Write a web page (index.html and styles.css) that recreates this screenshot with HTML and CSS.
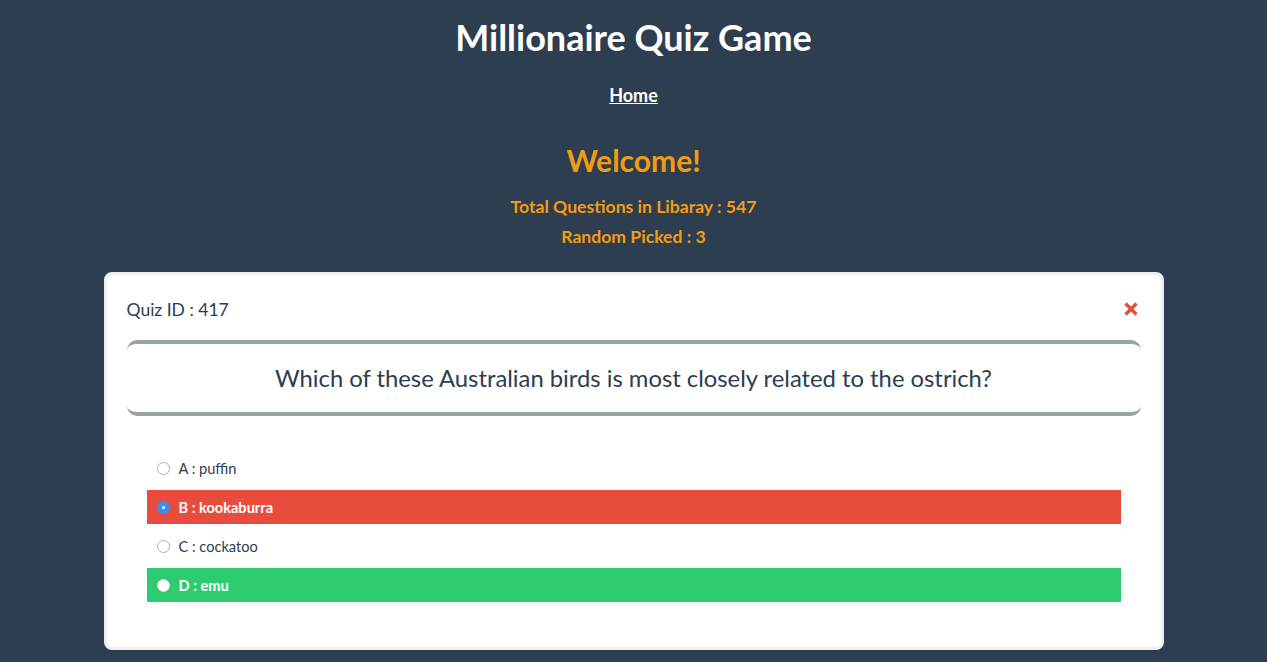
FILE: index.html
```html
<!DOCTYPE html>
<html>
<head>
<meta charset="utf-8">
<link rel="stylesheet" href="styles.css">
</head>
<body>
<header class="header">
  <h1 class="title">Millionaire Quiz Game</h1>
  <nav class="nav"><a href="#" class="nav-link">Home</a></nav>
</header>
<section class="welcome">
  <h2 class="welcome-title">Welcome!</h2>
  <p class="welcome-line">Total Questions in Libaray : 547</p>
  <p class="welcome-line">Random Picked : 3</p>
</section>
<main class="card">
  <div class="card-head">
    <span class="quiz-id">Quiz ID : 417</span>
    <span class="close">
      <svg width="16" height="16" viewBox="0 0 16 16"><path d="M2.5 2.5 L13.5 13.5 M13.5 2.5 L2.5 13.5" stroke="#e74c3c" stroke-width="3.2" stroke-linecap="butt"/></svg>
    </span>
  </div>
  <div class="question">Which of these Australian birds is most closely related to the ostrich?</div>
  <ul class="options">
    <li class="option"><span class="radio"></span><span class="opt-text">A : puffin</span></li>
    <li class="option option-wrong"><span class="radio radio-checked"></span><span class="opt-text">B : kookaburra</span></li>
    <li class="option"><span class="radio"></span><span class="opt-text">C : cockatoo</span></li>
    <li class="option option-right"><span class="radio radio-white"></span><span class="opt-text">D : emu</span></li>
  </ul>
</main>
</body>
</html>
```
FILE: styles.css
```css
html, body {
  margin: 0;
  padding: 0;
}
body {
  background: #2c3e50;
  font-family: Lato, "Open Sans", sans-serif;
  color: #2c3e50;
  height: 662px;
  overflow: hidden;
}
.header {
  text-align: center;
  padding-top: 15px;
}
.title {
  margin: 0;
  font-size: 36px;
  line-height: 44px;
  font-weight: 700;
  color: #ffffff;
}
.nav {
  margin-top: 25px;
}
.nav-link {
  color: #ffffff;
  font-weight: 700;
  font-size: 18px;
  line-height: 22px;
  text-decoration: underline;
}
.welcome {
  text-align: center;
  color: #f39c12;
  padding-top: 36px;
}
.welcome-title {
  margin: 0;
  font-size: 30px;
  line-height: 36px;
  font-weight: 700;
}
.welcome-line {
  margin: 0;
  font-size: 17.6px;
  line-height: 30px;
  font-weight: 700;
}
.welcome-title + .welcome-line {
  margin-top: 14px;
}
.card {
  box-sizing: border-box;
  width: 1060px;
  margin: 20px auto 0;
  background: #ffffff;
  border: 3px solid #ecf0f1;
  border-radius: 8px;
  padding: 22px 20px 45px;
}
.card-head {
  display: flex;
  justify-content: space-between;
  align-items: center;
  height: 24px;
  font-size: 17.5px;
}
.close {
  display: flex;
  margin-right: 2px;
}
.question {
  margin-top: 19px;
  border-top: 4px solid #95a5a6;
  border-bottom: 4px solid #95a5a6;
  border-radius: 10px;
  height: 68px;
  display: flex;
  align-items: center;
  justify-content: center;
  font-size: 23.8px;
}
.options {
  list-style: none;
  margin: 35px 20px 0;
  padding: 0;
  display: flex;
  flex-direction: column;
  gap: 5px;
}
.option {
  height: 34px;
  display: flex;
  align-items: center;
  padding-left: 10px;
  font-size: 14.6px;
  color: #2c3e50;
}
.option-wrong {
  background: #e74c3c;
  color: #ffffff;
  font-weight: 700;
}
.option-right {
  background: #2ecc71;
  color: #ffffff;
  font-weight: 700;
}
.radio {
  width: 13px;
  height: 13px;
  box-sizing: border-box;
  border-radius: 50%;
  border: 1px solid #b0b0b0;
  background: #ffffff;
  margin-right: 9px;
  flex: none;
  position: relative;
}
.radio-checked {
  background: #3b8ef0;
  border-color: #3b8ef0;
}
.radio-checked::after {
  content: "";
  position: absolute;
  left: 4px;
  top: 4px;
  width: 3px;
  height: 3px;
  border-radius: 50%;
  background: #ffffff;
}
.radio-white {
  border-color: #e0e0e0;
}
```
